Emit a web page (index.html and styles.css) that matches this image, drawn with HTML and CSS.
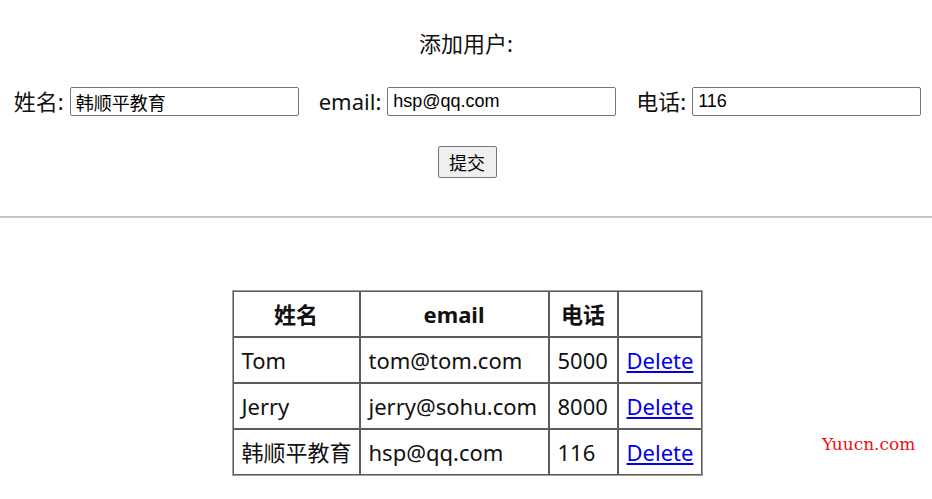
FILE: index.html
```html
<!DOCTYPE html>
<html lang="zh-CN">
<head>
<meta charset="utf-8">
<title>添加用户</title>
<link rel="stylesheet" href="styles.css">
</head>
<body>
<div class="page">
  <div class="title">添加用户:</div>
  <div class="form-row">
    <label class="field"><span class="label">姓名:</span><input class="input" type="text" value="韩顺平教育"></label>
    <label class="field"><span class="label">email:</span><input class="input" type="text" value="hsp@qq.com"></label>
    <label class="field"><span class="label">电话:</span><input class="input" type="text" value="116"></label>
  </div>
  <div class="btn-row"><button class="btn" type="button">提交</button></div>
  <hr class="divider">
  <table class="users">
    <colgroup>
      <col class="c1"><col class="c2"><col class="c3"><col class="c4">
    </colgroup>
    <thead>
      <tr><th>姓名</th><th>email</th><th>电话</th><th></th></tr>
    </thead>
    <tbody>
      <tr><td>Tom</td><td>tom@tom.com</td><td>5000</td><td><a class="link" href="#">Delete</a></td></tr>
      <tr><td>Jerry</td><td>jerry@sohu.com</td><td>8000</td><td><a class="link" href="#">Delete</a></td></tr>
      <tr><td>韩顺平教育</td><td>hsp@qq.com</td><td>116</td><td><a class="link" href="#">Delete</a></td></tr>
    </tbody>
  </table>
  <div class="watermark">Yuucn.com</div>
</div>
</body>
</html>
```

FILE: styles.css
```css
html, body {
  margin: 0;
  padding: 0;
  background: #fff;
}
body {
  font-family: "Noto Sans", "Noto Sans CJK SC", sans-serif;
  color: #111;
}
.page {
  position: relative;
  width: 932px;
  height: 499px;
  overflow: hidden;
}
.title {
  text-align: center;
  font-size: 22px;
  line-height: 30px;
  padding-top: 28px;
}
.form-row {
  display: flex;
  justify-content: center;
  gap: 20px;
  margin-top: 28px;
  padding-left: 3px;
}
.field {
  display: flex;
  align-items: center;
  gap: 6px;
  font-size: 22px;
  line-height: 30px;
}
.input {
  box-sizing: border-box;
  width: 229px;
  height: 29px;
  margin: 0;
  padding: 4px 5px 3px;
  border: 1px solid #767676;
  border-radius: 2px;
  font-family: "Liberation Sans", "Noto Sans CJK SC", sans-serif;
  font-size: 18px;
  line-height: 21px;
  color: #000;
  background: #fff;
}
.btn-row {
  display: flex;
  justify-content: center;
  margin-top: 30px;
  padding-left: 2px;
}
.btn {
  box-sizing: border-box;
  width: 59px;
  height: 32px;
  margin: 0;
  padding: 0;
  border: 1px solid #767676;
  border-radius: 2px;
  background: #efefef;
  font-family: "Noto Sans CJK SC", sans-serif;
  font-size: 18px;
  color: #000;
}
.divider {
  margin: 38px 0 0;
  border: 0;
  border-top: 2px solid #c6c6c6;
  height: 0;
}
.users {
  margin: 72px auto 0;
  width: 471px;
  table-layout: fixed;
  border-collapse: separate;
  border-spacing: 0;
  border: 1px solid #a0a0a0;
  font-size: 22px;
  position: relative;
  left: 1px;
}
.c1 { width: 127px; }
.c2 { width: 189px; }
.c3 { width: 69px; }
.c4 { width: 84px; }
.users th,
.users td {
  border: 1px solid #5c5c5c;
  height: 46px;
  padding: 0 0 0 8px;
  line-height: 30px;
  white-space: nowrap;
  box-sizing: border-box;
  overflow: hidden;
}
.users th {
  text-align: center;
  padding: 0;
  font-weight: 700;
}
.users td {
  text-align: left;
}
.link {
  color: #0000ee;
  text-decoration: underline;
}
.watermark {
  position: absolute;
  left: 822px;
  top: 433px;
  font-family: "DejaVu Serif", serif;
  font-size: 17px;
  line-height: 22px;
  color: #f01010;
}
```
